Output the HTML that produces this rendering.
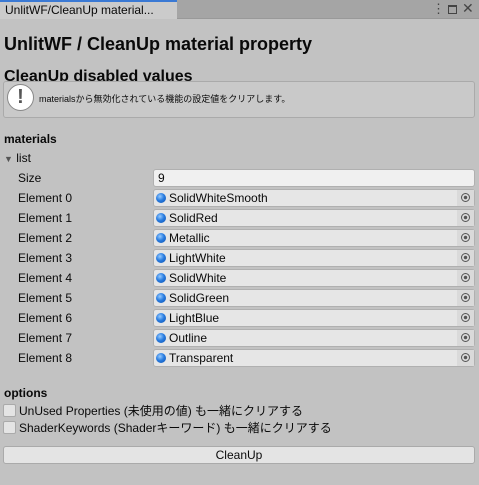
<!DOCTYPE html><html><head><style>
body{margin:0;width:479px;height:485px;background:#c2c2c2;font-family:"Liberation Sans","Noto Sans CJK JP",sans-serif;color:#090909;position:relative;overflow:hidden;font-size:12px}
div{position:absolute;box-sizing:border-box}
.lab{left:18px;font-size:12px;line-height:16px}
.f{left:153px;width:322px;height:18px;background:#e6e6e6;border:1px solid #b0b0b0;border-radius:3px;line-height:16px;padding-left:15px;font-size:12px}
.f .d{left:2px;top:3px;width:10px;height:10px;border-radius:50%;background:radial-gradient(circle at 40% 35%,#9cf 0,#2a7de0 45%,#0a4fb0 100%)}
.f .p{right:0;top:0;width:17px;height:16px;background:#dadada}
.f .p:after{content:"";position:absolute;left:4px;top:3px;width:7px;height:7px;border:1px solid #555;border-radius:50%;background:radial-gradient(circle,#555 0 1.5px,transparent 2px)}
.cb{left:3px;width:13px;height:13px;background:#e4e4e4;border:1px solid #aaa;border-radius:2px}
</style></head><body>
<div style="left:0;top:0;width:479px;height:19px;background:#a5a5a5;border-bottom:1px solid #999"></div>
<div style="left:0;top:0;width:177px;height:19px;background:#cbcbcb;border-top:2px solid #3a79d4;padding-left:5px;line-height:16px;font-size:12px">UnlitWF/CleanUp material...</div>
<div style="left:432px;top:1px;font-size:13px;color:#444">⋮</div>
<div style="left:448px;top:5px;width:9px;height:9px;border:1px solid #444;border-top-width:2px"></div>
<div style="left:462px;top:0px;font-size:14px;color:#444">✕</div>
<div style="left:4px;top:33px;font-size:18px;font-weight:bold;line-height:22px">UnlitWF / CleanUp material property</div>
<div style="left:4px;top:67px;font-size:16px;font-weight:bold;line-height:20px;height:14px;overflow:hidden">CleanUp disabled values</div>
<div style="left:3px;top:81px;width:472px;height:37px;background:#c9c9c9;border:1px solid #aaa;border-radius:3px"></div>
<div style="left:7px;top:84px;width:27px;height:27px;border-radius:50%;background:#fff;border:1px solid #888;text-align:center;font-weight:bold;font-size:20px;line-height:25px;color:#555">!</div>
<div style="left:39px;top:93px;font-size:9px;line-height:12px">materialsから無効化されている機能の設定値をクリアします。</div>
<div style="left:4px;top:131px;font-weight:bold;line-height:16px">materials</div>
<div style="left:4px;top:150px;line-height:16px"><span style="font-size:9px;color:#555">▼</span> list</div>
<div class="lab" style="top:170px">Size</div>
<div class="f" style="top:169px;padding-left:4px;background:#f0f0f0">9</div>
<div class="lab" style="top:190px">Element 0</div><div class="f" style="top:189px"><div class="d"></div>SolidWhiteSmooth<div class="p"></div></div>
<div class="lab" style="top:210px">Element 1</div><div class="f" style="top:209px"><div class="d"></div>SolidRed<div class="p"></div></div>
<div class="lab" style="top:230px">Element 2</div><div class="f" style="top:229px"><div class="d"></div>Metallic<div class="p"></div></div>
<div class="lab" style="top:250px">Element 3</div><div class="f" style="top:249px"><div class="d"></div>LightWhite<div class="p"></div></div>
<div class="lab" style="top:270px">Element 4</div><div class="f" style="top:269px"><div class="d"></div>SolidWhite<div class="p"></div></div>
<div class="lab" style="top:290px">Element 5</div><div class="f" style="top:289px"><div class="d"></div>SolidGreen<div class="p"></div></div>
<div class="lab" style="top:310px">Element 6</div><div class="f" style="top:309px"><div class="d"></div>LightBlue<div class="p"></div></div>
<div class="lab" style="top:330px">Element 7</div><div class="f" style="top:329px"><div class="d"></div>Outline<div class="p"></div></div>
<div class="lab" style="top:350px">Element 8</div><div class="f" style="top:349px"><div class="d"></div>Transparent<div class="p"></div></div>
<div style="left:4px;top:385px;font-weight:bold;line-height:16px">options</div>
<div class="cb" style="top:404px"></div><div style="left:19px;top:403px;line-height:16px">UnUsed Properties (未使用の値) も一緒にクリアする</div>
<div class="cb" style="top:421px"></div><div style="left:19px;top:420px;line-height:16px">ShaderKeywords (Shaderキーワード) も一緒にクリアする</div>
<div style="left:3px;top:446px;width:472px;height:18px;background:#e4e4e4;border:1px solid #aaa;border-radius:3px;text-align:center;line-height:16px">CleanUp</div>
</body></html>
